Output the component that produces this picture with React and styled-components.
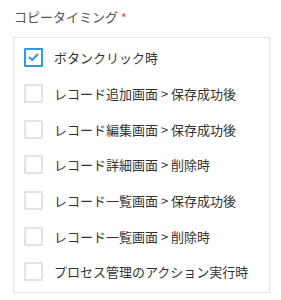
import React from "react";
import styled, { createGlobalStyle } from "styled-components";

const Global = createGlobalStyle`
  html, body { margin: 0; padding: 0; background: #fff; }
  body { font-family: "Noto Sans CJK JP", "Noto Sans", sans-serif; }
`;

const Field = styled.div`
  padding: 8px 12px 0 13px;
  width: 257px;
`;

const Label = styled.div`
  display: flex;
  align-items: flex-start;
  height: 29px;
  padding-left: 1px;
  font-size: 13px;
  line-height: 18px;
  color: #555;
`;

const Required = styled.span`
  color: #e74c3c;
  font-size: 12px;
  line-height: 14px;
  margin-left: 3px;
  margin-top: 3px;
`;

const Box = styled.div`
  border: 1px solid #e3e3e3;
  padding: 2px 0 2px 10px;
  display: flex;
  flex-direction: column;
`;

const Row = styled.label`
  display: flex;
  align-items: center;
  height: 35.67px;
  font-size: 13px;
  color: #333;
  gap: 11px;
`;

const Check = styled.span`
  box-sizing: border-box;
  width: 19px;
  height: 19px;
  flex: none;
  border: 2px solid ${(p) => (p.$checked ? "#3498db" : "#e3e3e3")};
  border-radius: 1px;
  display: flex;
  align-items: center;
  justify-content: center;
`;

const items = [
  { text: "ボタンクリック時", checked: true },
  { text: "レコード追加画面 > 保存成功後" },
  { text: "レコード編集画面 > 保存成功後" },
  { text: "レコード詳細画面 > 削除時" },
  { text: "レコード一覧画面 > 保存成功後" },
  { text: "レコード一覧画面 > 削除時" },
  { text: "プロセス管理のアクション実行時" },
];

export default function App() {
  return (
    <>
      <Global />
      <Field>
        <Label>
          コピータイミング<Required>*</Required>
        </Label>
        <Box>
          {items.map((it) => (
            <Row key={it.text}>
              <Check $checked={it.checked}>
                {it.checked && (
                  <svg width="11" height="9" viewBox="0 0 11 9">
                    <path d="M1.5 4.5 L4.2 7 L9.5 1.5" fill="none" stroke="#3498db" strokeWidth="2" strokeLinecap="round" strokeLinejoin="round" />
                  </svg>
                )}
              </Check>
              <span>{it.text}</span>
            </Row>
          ))}
        </Box>
      </Field>
    </>
  );
}
